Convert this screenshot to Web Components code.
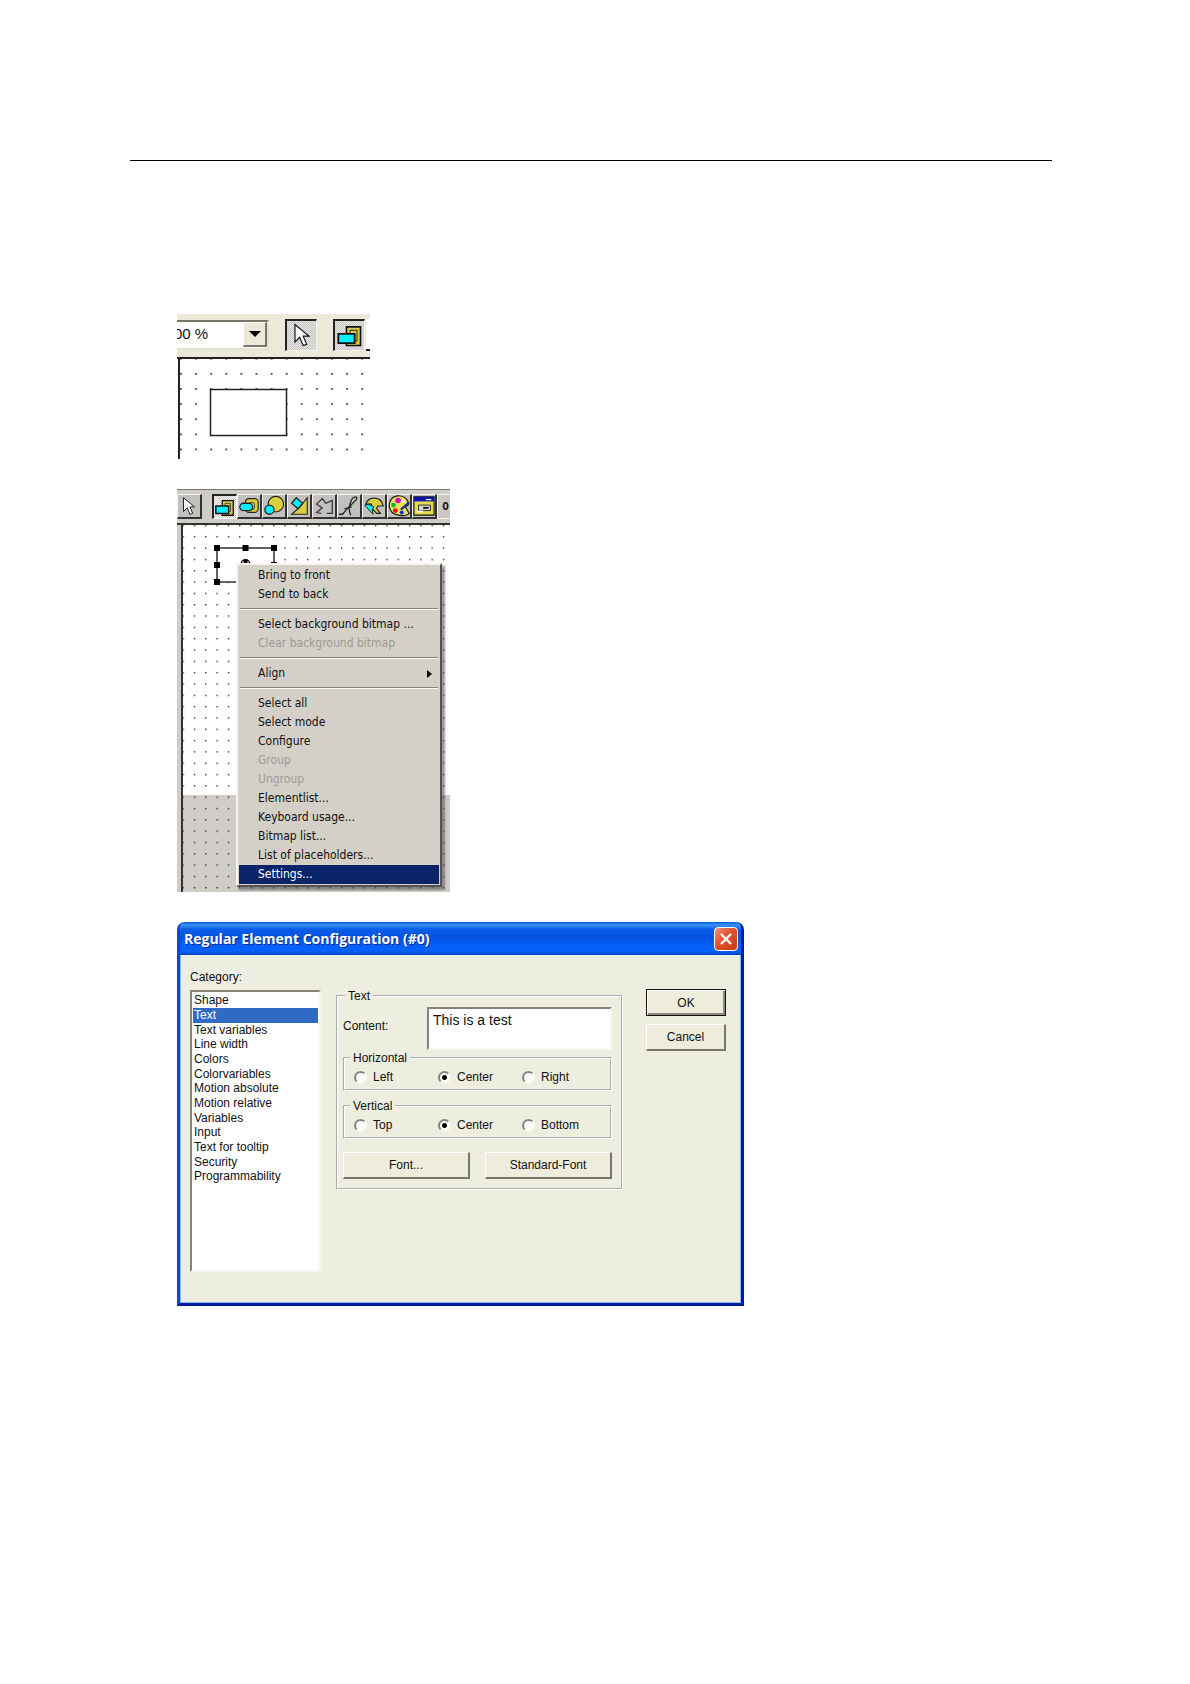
<!DOCTYPE html>
<html lang="en">
<head>
<meta charset="utf-8">
<title>Regular Element Configuration</title>
<style>
  body { margin: 0; background: #fff; }
</style>
</head>
<body>
<manual-page>
  <zoom-figure></zoom-figure>
  <menu-figure></menu-figure>
  <xp-dialog heading="Regular Element Configuration (#0)">
    <xp-list slot="list" label="Category:" selected="Text"
      items="Shape|Text|Text variables|Line width|Colors|Colorvariables|Motion absolute|Motion relative|Variables|Input|Text for tooltip|Security|Programmability"></xp-list>
    <text-settings slot="main"></text-settings>
    <xp-button slot="actions" default>OK</xp-button>
    <xp-button slot="actions">Cancel</xp-button>
  </xp-dialog>
</manual-page>
<script>
const define = (name, html, setup) => customElements.define(name, class extends HTMLElement {
  connectedCallback() {
    if (this.shadowRoot) return;
    const root = this.attachShadow({ mode: 'open' });
    root.innerHTML = '<style>:host,*{box-sizing:border-box}</style>' +
      (typeof html === 'function' ? html(this) : html);
    if (setup) setup(this, root);
  }
});

/* Toolbar pictures, drawn on a 24 x 24 grid */
const icons = {
  arrow: '<path d="M6 3v15l4-4 3 7 3-1-3-7h5z" fill="#fff" stroke="#111"/>',
  rect: '<path d="M9 5h12v16H9z" fill="#d9d03f" stroke="#111" stroke-width="1.4"/><path d="M12 8h6v9h-6z" fill="#d9d03f" stroke="#443" stroke-width="1"/><path d="M2 11h14v8H2z" fill="#00f0ff" stroke="#111" stroke-width="1.6"/>',
  round: '<rect x="8" y="4" width="14" height="15" rx="4" fill="#d9d03f" stroke="#222" stroke-width="1.2"/><rect x="12" y="8" width="6" height="8" rx="2" fill="none" stroke="#443"/><rect x="2" y="9" width="14" height="8" rx="4" fill="#00f0ff" stroke="#222" stroke-width="1.4"/>',
  ellipse: '<circle cx="14" cy="10" r="8.5" fill="#d9d03f" stroke="#222" stroke-width="1.2"/><circle cx="7" cy="16" r="5" fill="#00f0ff" stroke="#222" stroke-width="1.4"/>',
  polygon: '<path d="M21 3v18H4l9-8z" fill="#d9d03f" stroke="#222" stroke-width="1.2"/><path d="M9 3l7 6-5 6-7-6z" fill="#00f0ff" stroke="#222" stroke-width="1.4"/>',
  polyline: '<path d="M15 20h6V6l-7 3-4-5-6 6 6 4-6 5 5 1" fill="none" stroke="#333" stroke-width="1.4"/>',
  curve: '<path d="M1 21h4l4-5 11-11c2-4-3-4-5 0-3 6-4 12-1 17M7 15l8-2" fill="none" stroke="#222" stroke-width="1.4"/>',
  pie: '<path d="M3 10C6 1 20 1 22 12h-6l-1 3 4 5h-4l-5-5-1-5z" fill="#d9d03f" stroke="#222" stroke-width="1.3"/><path d="M2 11l4-1 6 3-2 3 1 5-4-4z" fill="#00f0ff" stroke="#222"/>',
  palette: '<path d="M10 1c8-1 13 5 12 10l-3 2 4 7c-3 4-17 3-20-3C-1 10 3 2 10 1z" fill="#efe05a" stroke="#111" stroke-width="1.2"/><circle cx="11" cy="6" r="3" fill="#e000c8"/><circle cx="6" cy="11" r="2.6" fill="#10b838"/><circle cx="8" cy="17" r="2.6" fill="#e01818"/><circle cx="15" cy="19" r="2.2" fill="#1830d8"/><circle cx="17" cy="7" r="1.6" fill="#fff"/><path d="M23 8l-9 8" stroke="#203090" stroke-width="2.4"/>',
  dialog: '<path d="M1 2h22v20H1z" fill="#e6db4a" stroke="#111" stroke-width="1.2"/><path d="M1 2h22v5H1z" fill="#0a14a8"/><path d="M14 5h6" stroke="#fff" stroke-width="1.4"/><path d="M6 11h13v6H6z" fill="#d8d8d0" stroke="#222"/><path d="M17 14h-6" stroke="#111" stroke-width="2"/><path d="M4 18h7" stroke="#fff" stroke-width="2"/>'
};

define('manual-page', `
<style>
  :host { display: block; padding: 160px 138px 0 130px; font-family: "Liberation Sans", sans-serif; color: #111; }
  hr { margin: 0; border: 0; border-top: 1px solid #000; }
  main { display: flex; flex-direction: column; align-items: flex-start; gap: 30px; padding: 153px 0 120px 47px; }
</style>
<hr><main><slot></slot></main>`);

define('tool-button', el => `
<style>
  :host { display: block; flex: none; }
  button { display: grid; place-items: center; padding: 0; width: 25px; height: 25px; background: #c3c1bd;
    border: solid; border-width: 1px 2px 2px 1px; border-color: #f4f4f0 #333 #333 #f4f4f0; }
  svg { width: 22px; height: 22px; display: block; }
  :host([pressed]) button { border-width: 2px 1px 1px 2px; border-color: #222 #f4f4f0 #f4f4f0 #222;
    background: repeating-conic-gradient(#fff 0 25%, #c8c6c4 0 50%) 0 0 / 2px 2px; }
  :host([large]) button { width: 32px; height: 32px; background: repeating-conic-gradient(#e4e2e0 0 25%, #cbc8c8 0 50%) 0 0 / 2px 2px; }
  :host([large]) svg { width: 28px; height: 28px; }
</style>
<button type="button" aria-label="${el.getAttribute('icon')}"><svg viewBox="0 0 24 24">${icons[el.getAttribute('icon')]}</svg></button>`);

define('zoom-figure', `
<style>
  :host { display: block; width: 193px; background: #fff; }
  .bar { display: flex; align-items: center; gap: 16px; height: 43px; padding-bottom: 2px; background: #ece9d8; overflow: hidden; }
  .combo { flex: none; display: flex; align-items: center; width: 92px; height: 30px; background: #fff;
    border: solid; border-width: 2px 2px 2px 0; border-color: #77766a #e4e2d2 #e4e2d2 #77766a; }
  select { appearance: none; flex: 1; min-width: 0; border: 0; padding: 0 0 2px; margin: 0; background: none; color: #111;
    text-indent: -3px; font: 15px/20px "Liberation Sans", sans-serif; }
  .drop { flex: none; width: 24px; height: 25px; display: grid; place-items: center; background: #ece9d8;
    border: solid; border-width: 1px 2px 2px 1px; border-color: #fff #77766a #77766a #fff; }
  .next { flex: none; width: 8px; height: 32px; background: #fff; border-bottom: 2px solid #222; margin-left: -15px; }
  .canvas { display: block; width: 100%; height: 102px; }
</style>
<div class="bar">
  <div class="combo"><select aria-label="Zoom"><option>00 %</option></select>
    <span class="drop"><svg width="12" height="7"><path d="M0 0h12L6 6z"/></svg></span></div>
  <tool-button icon="arrow" pressed large></tool-button>
  <tool-button icon="rect" pressed large></tool-button>
  <span class="next"></span>
</div>
<svg class="canvas" viewBox="0 0 193 102" preserveAspectRatio="xMinYMin slice">
  <defs><pattern id="d" x="3" y="1" width="15.1" height="15.1" patternUnits="userSpaceOnUse"><path d="M0 0h2v1.500H0z" fill="#333"/></pattern></defs>
  <path d="M2 2h191v100H2z" fill="url(#d)"/>
  <path d="M0 0h193v2H0zM1 0h2v102H1z" fill="#222"/>
  <path d="M33.500 32.500h76v46h-76z" fill="#fff" stroke="#222" stroke-width="1.500"/>
</svg>`);

define('menu-item', `
<style>
  :host { display: flex; align-items: center; justify-content: space-between; height: 19px; padding: 0 7px 0 19px; }
  button { flex: 1; text-align: left; padding: 0; border: 0; background: none; color: inherit; font: inherit; white-space: nowrap; }
  :host([disabled]) { color: #9d9a94; text-shadow: 1px 1px #fff; }
  :host([active]) { background: #0a246a; color: #fff; }
  svg { display: none; }
  :host([submenu]) svg { display: block; }
</style>
<button type="button" role="menuitem"><slot></slot></button><svg width="5" height="8"><path d="M0 0v8l5-4z"/></svg>`,
(el, root) => { root.querySelector('button').disabled = el.hasAttribute('disabled'); });

define('context-menu', `
<style>
  :host { display: block; padding: 1px; background: #d4d0c8; color: #111; border: 2px solid; border-color: #f6f5f2 #55524e #55524e #f6f5f2;
    box-shadow: 3px 3px 2px #55555599; font: 12px/19px "DejaVu Sans Condensed", sans-serif; }
  ::slotted(hr) { margin: 4px 1px 5px; border: 0; border-top: 1px solid #84817b; border-bottom: 1px solid #fff; }
</style><slot></slot>`);

define('menu-figure', `
<style>
  :host { display: block; position: relative; width: 273px; overflow: hidden; }
  .bar { display: flex; align-items: center; height: 34px; background: #d0cdc8; border-top: 1px solid #777; overflow: hidden; }
  .bar tool-button:first-child { margin-right: 10px; }
  .ok { flex: none; display: grid; place-items: center; width: 25px; height: 25px; padding: 0 8px 0 0; border: 1px solid #f4f4f0; background: #cbc8c3;
    font: bold 11px/14px "DejaVu Sans Mono", monospace; color: #111; }
  .canvas { display: block; width: 100%; height: 369px; }
  context-menu { position: absolute; left: 59px; top: 74px; width: 206px; }
</style>
<div class="bar">
  <tool-button icon="arrow"></tool-button><tool-button icon="rect" pressed></tool-button><tool-button icon="round"></tool-button>
  <tool-button icon="ellipse"></tool-button><tool-button icon="polygon"></tool-button><tool-button icon="polyline"></tool-button>
  <tool-button icon="curve"></tool-button><tool-button icon="pie"></tool-button><tool-button icon="palette"></tool-button>
  <tool-button icon="dialog"></tool-button><button class="ok" type="button">O</button>
</div>
<svg class="canvas" viewBox="0 0 273 369" preserveAspectRatio="xMinYMin slice">
  <defs><pattern id="d" x="5.500" y="1.800" width="11.320" height="11.320" patternUnits="userSpaceOnUse"><path d="M0 0h1.300v1.300H0z" fill="#222"/></pattern></defs>
  <path d="M0 0h273v369H0z" fill="#fff"/>
  <path d="M0 0h4v369H0zM5 272h268v97H5z" fill="#d0cdc8"/>
  <path d="M5 2h268v367H5z" fill="url(#d)"/>
  <path d="M0 0h273v2H0zM4 0h2v369H4z" fill="#333"/>
  <path d="M40 25h57v34H40z" fill="#fff" stroke="#333" stroke-width="1.500"/>
  <path d="M37 22h6v6h-6zM65.500 22h6v6h-6zM94 22h6v6h-6zM37 39h6v6h-6zM94 39h6v6h-6zM37 56h6v6h-6z"/>
  <circle cx="68.500" cy="41" r="5"/><path d="M66 38v6M71 38v6" stroke="#fff"/>
</svg>
<context-menu role="menu">
  <menu-item>Bring to front</menu-item><menu-item>Send to back</menu-item><hr>
  <menu-item>Select background bitmap ...</menu-item><menu-item disabled>Clear background bitmap</menu-item><hr>
  <menu-item submenu>Align</menu-item><hr>
  <menu-item>Select all</menu-item><menu-item>Select mode</menu-item><menu-item>Configure</menu-item>
  <menu-item disabled>Group</menu-item><menu-item disabled>Ungroup</menu-item>
  <menu-item>Elementlist...</menu-item><menu-item>Keyboard usage...</menu-item><menu-item>Bitmap list...</menu-item>
  <menu-item>List of placeholders...</menu-item><menu-item active>Settings...</menu-item>
</context-menu>`);

define('xp-button', `
<style>
  :host { display: block; }
  button { display: block; width: 100%; height: 27px; padding: 0; background: #edecdd; color: #111; font: 12px/16px "Liberation Sans", sans-serif;
    border: solid; border-width: 1px 2px 2px 1px; border-color: #fff #77766a #77766a #fff; }
  :host([default]) button { border: 1px solid #111; box-shadow: inset 1px 1px #fff, inset -2px -2px #8b8979; }
</style><button type="button"><slot></slot></button>`);

define('xp-list', el => `
<style>
  :host { display: flex; flex-direction: column; gap: 6px; font: 12px/14px "Liberation Sans", sans-serif; }
  select { display: block; width: 131px; height: 282px; padding: 1px; overflow: hidden; background: #fff; color: #111; font: inherit; border-radius: 0;
    border: 2px solid; border-color: #85837a #f6f5ee #f6f5ee #85837a; outline: 0; scrollbar-width: none; }
  option { height: 15px; min-height: 0; padding: 0 1px; line-height: 15px; }
  option:nth-child(3n) { height: 14px; line-height: 14px; }
  option:checked { background: linear-gradient(#316ac5, #316ac5); -webkit-text-fill-color: #fff; }
</style>
<label for="l">${el.getAttribute('label')}</label>
<select id="l" size="19">${el.getAttribute('items').split('|').map(t =>
  `<option${t === el.getAttribute('selected') ? ' selected' : ''}>${t}</option>`).join('')}</select>`);

define('radio-row', el => `
<style>
  :host { display: block; }
  fieldset { margin: 0; min-width: 0; padding: 4px 0 4px 9px; border: 2px groove #fff; }
  legend { padding: 0 3px; margin-left: -4px; line-height: 14px; }
  div { display: grid; grid-template-columns: 84px 84px 1fr; }
  label { display: flex; align-items: center; gap: 6px; line-height: 16px; }
  input { appearance: none; margin: 0; width: 13px; height: 13px; border-radius: 50%; background: #fff;
    border: 2px solid; border-color: #85837a #f8f8f2 #f8f8f2 #85837a; }
  input:checked { background: radial-gradient(circle, #000 0 2px, #fff 3px); }
</style>
<fieldset><legend>${el.getAttribute('label')}</legend><div>${el.getAttribute('options').split('|').map((t, i) =>
  `<label><input type="radio" name="r"${i === 1 ? ' checked' : ''}>${t}</label>`).join('')}</div></fieldset>`);

define('text-settings', `
<style>
  :host { display: block; font: 12px/14px "Liberation Sans", sans-serif; }
  fieldset { margin: 0; min-width: 0; width: 287px; padding: 4px 9px 9px 5px; border: 2px groove #fff; }
  legend { padding: 0 3px; margin-left: 2px; }
  .content { display: grid; grid-template-columns: 1fr 185px; align-items: center; }
  textarea { display: block; width: 100%; height: 43px; padding: 3px 4px; resize: none; overflow: hidden; border: 2px solid; border-radius: 0;
    border-color: #85837a #f6f5ee #f6f5ee #85837a; background: #fff; color: #111; font: 14px/16px "Liberation Sans", sans-serif; outline: 0; }
  label { padding-bottom: 5px; }
  .rows { display: grid; gap: 8px; padding-top: 1px; }
  .buttons { display: grid; grid-template-columns: 1fr 1fr; gap: 15px; padding-top: 13px; }
</style>
<fieldset><legend>Text</legend>
  <div class="content"><label for="c">Content:</label><textarea id="c" spellcheck="false">This is a test</textarea></div>
  <div class="rows">
    <radio-row label="Horizontal" options="Left|Center|Right"></radio-row>
    <radio-row label="Vertical" options="Top|Center|Bottom"></radio-row>
  </div>
  <div class="buttons"><xp-button>Font...</xp-button><xp-button>Standard-Font</xp-button></div>
</fieldset>`);

define('xp-dialog', el => `
<style>
  :host { display: block; width: 567px; border: solid; border-width: 0 3px 3px; border-color: #0831d9 #001c9c #001c9c #0a48dc;
    border-radius: 8px 8px 0 0; background: #edeedf; overflow: hidden; }
  header { display: flex; align-items: center; justify-content: space-between; height: 33px; margin: 0 -3px; padding: 0 6px 0 7px; color: #fff;
    background: linear-gradient(#0a58d8, #3a94ff 3px, #0a5ee8 7px, #0352e0 16px, #0560fa 24px, #0463f8 29px, #0144c8); }
  h2 { margin: 0; font: bold 14px/20px "Open Sans", sans-serif; text-shadow: 1px 1px #0a2a90; }
  .close { display: grid; place-items: center; width: 24px; height: 24px; padding: 0; border: 1px solid #fff; border-radius: 4px;
    background: linear-gradient(135deg, #f0937a, #e0512c 45%, #c53a18); }
  .body { display: flex; align-items: flex-start; min-height: 348px; padding: 15px 14px 30px 9px; border: 1px solid #8bb6f0; border-top: 0; }
  .main { margin: 19px 23px 0 15px; }
  .actions { flex: 1; display: grid; gap: 8px; padding-top: 19px; }
</style>
<header><h2>${el.getAttribute('heading')}</h2>
  <button class="close" type="button" aria-label="Close"><svg width="14" height="14"><path d="M2 2l10 10M12 2L2 12" stroke="#fff" stroke-width="2.400"/></svg></button></header>
<div class="body"><slot name="list"></slot><div class="main"><slot name="main"></slot></div><div class="actions"><slot name="actions"></slot></div></div>`);
</script>
</body>
</html>
